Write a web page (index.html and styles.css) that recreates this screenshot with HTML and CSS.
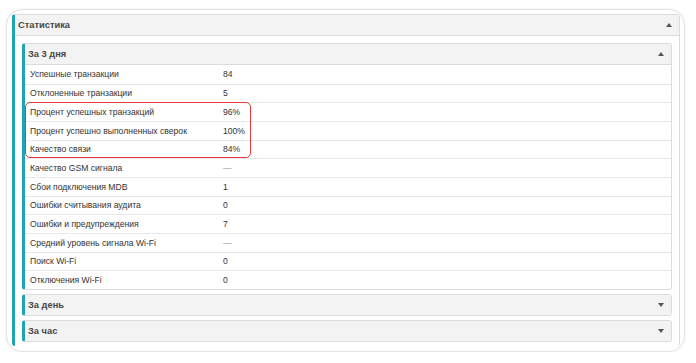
FILE: index.html
```html
<!DOCTYPE html>
<html lang="ru">
<head>
  <meta charset="UTF-8">
  <meta name="viewport" content="width=device-width, initial-scale=1">
  <title>Статистика</title>
  <link rel="stylesheet" href="styles.css">
</head>
<body>

  <div class="card">
    <section class="panel">
      <div class="panel-heading">
        <span>Статистика</span>
        <span class="caret up"></span>
      </div>
      <div class="panel-body">

        <!-- За 3 дня -->
        <section class="panel sub">
          <div class="panel-heading">
            <span>За 3 дня</span>
            <span class="caret up"></span>
          </div>
          <div class="stats">
            <div class="row"><span class="label">Успешные транзакции</span><span class="value">84</span></div>
            <div class="row"><span class="label">Отклоненные транзакции</span><span class="value">5</span></div>
            <div class="highlight">
              <div class="row"><span class="label">Процент успешных транзакций</span><span class="value">96%</span></div>
              <div class="row"><span class="label">Процент успешно выполненных сверок</span><span class="value">100%</span></div>
              <div class="row"><span class="label">Качество связи</span><span class="value">84%</span></div>
            </div>
            <div class="row"><span class="label">Качество GSM сигнала</span><span class="value empty">—</span></div>
            <div class="row"><span class="label">Сбои подключения MDB</span><span class="value">1</span></div>
            <div class="row"><span class="label">Ошибки считывания аудита</span><span class="value">0</span></div>
            <div class="row"><span class="label">Ошибки и предупреждения</span><span class="value">7</span></div>
            <div class="row"><span class="label">Средний уровень сигнала Wi-Fi</span><span class="value empty">—</span></div>
            <div class="row"><span class="label">Поиск Wi-Fi</span><span class="value">0</span></div>
            <div class="row"><span class="label">Отключения Wi-Fi</span><span class="value">0</span></div>
          </div>
        </section>

        <section class="panel sub">
          <div class="panel-heading">
            <span>За день</span>
            <span class="caret down"></span>
          </div>
        </section>

        <section class="panel sub">
          <div class="panel-heading">
            <span>За час</span>
            <span class="caret down"></span>
          </div>
        </section>

      </div>
    </section>
  </div>

</body>
</html>
```

FILE: styles.css
```css
/* General Reset */
* {
  margin: 0;
  padding: 0;
  box-sizing: border-box;
}
body {
  background: #fff;
  font-family: "Liberation Sans", Arial, sans-serif;
  font-size: 8.6px;
  color: #333;
}

/* ===== OUTER CARD ===== */
.card {
  margin: 9px 11px 0 6px;
  height: 343px;
  padding: 4px 4px 5px 5px;
  border: 1px solid #e2e2e2;
  border-radius: 16px;
  box-shadow: 0 0 3px rgba(0,0,0,0.08);
}

/* ===== PANELS ===== */
.panel {
  border: 1px solid #dcdcdc;
  border-left: 3px solid #1fa3b6;
  border-radius: 3px;
  background: #fff;
}
.card > .panel {
  height: 100%;
  border-bottom: none;
}
.panel-heading {
  display: flex;
  align-items: center;
  justify-content: space-between;
  height: 21px;
  padding: 0 7px 0 3px;
  background: #f3f3f3;
  border-bottom: 1px solid #dcdcdc;
  font-size: 9.3px;
  font-weight: bold;
  color: #474747;
}
.panel-body {
  padding: 7px 7px 0 7px;
}
.sub {
  margin-bottom: 4px;
}
.sub .panel-heading {
  height: 21px;
  padding-left: 3px;
}
.sub:not(:first-child) .panel-heading {
  height: 20px;
  border-bottom: none;
}

/* carets */
.caret {
  width: 0;
  height: 0;
  border-left: 3px solid transparent;
  border-right: 3px solid transparent;
}
.caret.up { border-bottom: 4px solid #555; }
.caret.down { border-top: 4px solid #555; }

/* ===== STATS TABLE ===== */
.row {
  display: flex;
  align-items: center;
  height: 18.67px;
  padding-left: 5px;
  border-top: 1px solid #e8e8e8;
}
.stats > .row:first-child {
  border-top: none;
}
.label {
  width: 193px;
}
.value.empty {
  color: #888;
}
.highlight {
  position: relative;
}
.highlight::after {
  content: '';
  position: absolute;
  top: 0;
  bottom: 0;
  left: 0;
  width: 224px;
  border: 1px solid #e53a3a;
  border-radius: 5px;
  pointer-events: none;
}
```
